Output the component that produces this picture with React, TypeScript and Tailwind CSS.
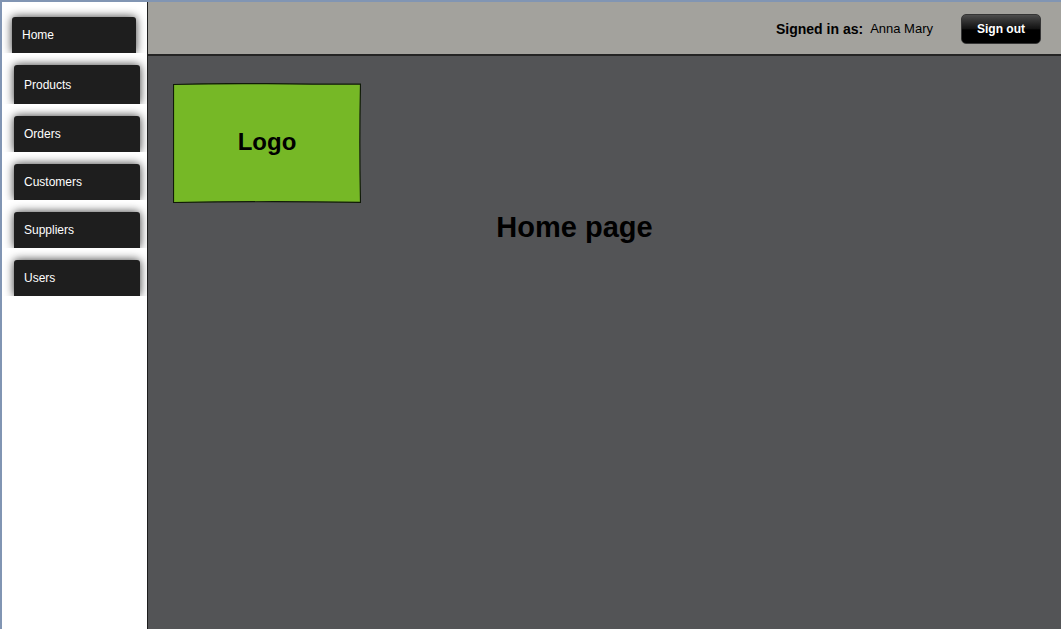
import React from "react";

type NavItem = { label: string; item: string; tab: string };

const navItems: NavItem[] = [
  { label: "Home", item: "pt-[15px] pl-2.5 pr-[11px]", tab: "h-9" },
  { label: "Products", item: "pt-3 pl-3 pr-[7px]", tab: "h-[39px]" },
  { label: "Orders", item: "pt-3 pl-3 pr-[7px]", tab: "h-9" },
  { label: "Customers", item: "pt-3 pl-3 pr-[7px]", tab: "h-9" },
  { label: "Suppliers", item: "pt-3 pl-3 pr-[7px]", tab: "h-9" },
  { label: "Users", item: "pt-3 pl-3 pr-[7px]", tab: "h-9" },
];

function Sidebar() {
  return (
    <nav aria-label="Main" className="w-[146px] shrink-0 border-r border-[#1d1d1d] bg-white">
      <ul>
        {navItems.map(({ label, item, tab }) => (
          <li key={label} className={`overflow-hidden ${item}`}>
            <a
              href="#"
              className={`flex items-center rounded-t-[3px] bg-[#1e1e1e] px-2.5 text-xs text-white shadow-[0_0_10px_0_rgba(0,0,0,0.8)] ${tab}`}
            >
              {label}
            </a>
          </li>
        ))}
      </ul>
    </nav>
  );
}

function Header() {
  return (
    <header className="flex h-[54px] items-center justify-end border-b-2 border-[#242424] bg-[#a3a29d] pt-0.5 pr-5">
      <p className="flex items-center gap-[7px] text-black">
        <span className="text-sm font-bold">Signed in as:</span>
        <span className="text-[13px]">Anna Mary</span>
      </p>
      <button
        type="button"
        className="ml-7 h-[30px] w-20 rounded-[5px] border border-[#353535] bg-linear-to-b from-[#4d4d4d] via-[#111] via-50% to-black to-55% text-xs font-bold text-white"
      >
        Sign out
      </button>
    </header>
  );
}

function Logo() {
  return (
    <div className="grid h-[120px] w-[188px] place-items-center">
      <svg
        viewBox="0 0 188 120"
        aria-hidden="true"
        className="col-start-1 row-start-1 h-full w-full"
      >
        <path
          d="M.5 1.5 Q50 .2 94 .7 T187.5 1.2 Q186.2 60 187.5 119.3 Q94 118 .5 119.5 Z"
          fill="#76b826"
          stroke="#101a08"
          strokeWidth="1.2"
        />
      </svg>
      <span className="col-start-1 row-start-1 pb-0.5 text-2xl font-bold">Logo</span>
    </div>
  );
}

export default function App() {
  return (
    <div className="flex min-h-screen border-t-2 border-l-2 border-[#8195b3] bg-[#535456] font-['Liberation_Sans',Arial,sans-serif] text-black">
      <Sidebar />
      <div className="min-w-0 flex-1">
        <Header />
        <main className="pt-[27px] pl-[25px]">
          <Logo />
          <h1 className="mt-1.5 pr-[85px] text-center text-[29px] leading-9 font-bold">Home page</h1>
        </main>
      </div>
    </div>
  );
}
